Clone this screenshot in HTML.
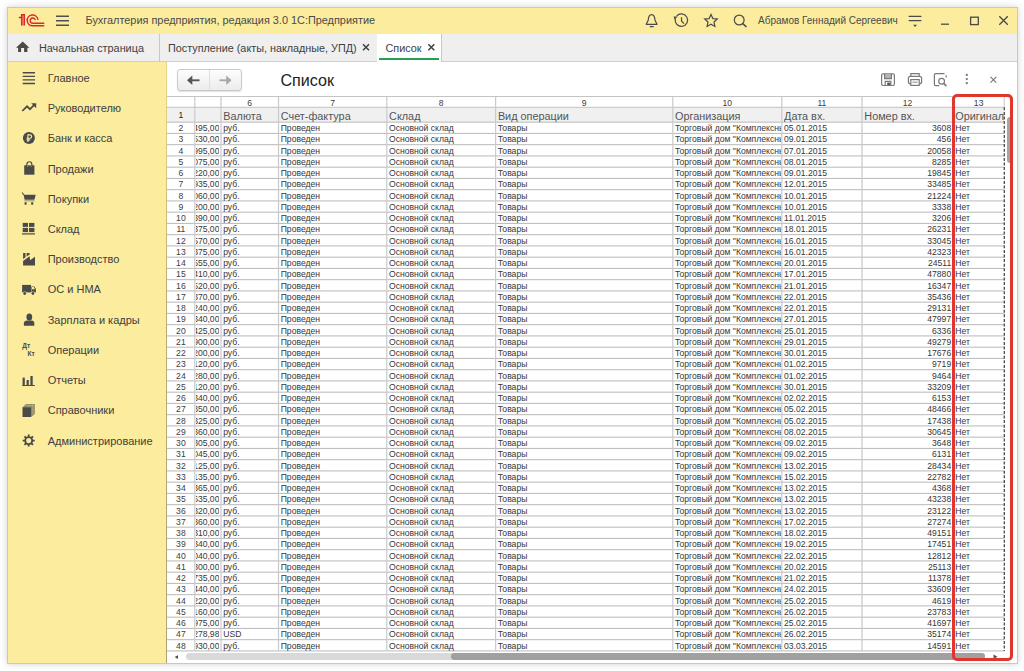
<!DOCTYPE html><html><head><meta charset="utf-8"><style>
*{margin:0;padding:0;box-sizing:border-box}
html,body{width:1024px;height:671px;overflow:hidden;background:#fff;font-family:"Liberation Sans",sans-serif}
.a{position:absolute}
.t{position:absolute;white-space:nowrap}
#win{position:absolute;left:7px;top:7px;width:1011px;height:657px;border:1px solid #dccb84;box-shadow:0 0 7px rgba(0,0,0,0.18);background:#fff;overflow:hidden}
</style></head><body>
<div id="win"></div>

<div class="a" style="left:8px;top:8px;width:1009px;height:26px;background:#fbec9e"></div>
<div class="a" style="left:8px;top:34px;width:1009px;height:28px;background:#efefef;border-bottom:1px solid #cfcfcf"></div>
<div class="a" style="left:8px;top:62px;width:158.5px;height:601px;background:#fbec9e"></div>
<div class="a" style="left:165.8px;top:62px;width:1.2px;height:601px;background:linear-gradient(#e6d98c,#b8ae76 40%,#aca472)"></div>
<svg class="a" style="left:0;top:0" width="60" height="34" viewBox="0 0 60 34">
<g fill="none" stroke="#da2a2c" stroke-width="1.5" stroke-linecap="round">
<path d="M21.7,25.6 V14.8 H24.3 V25.6" fill="#f0a58c" stroke-linecap="butt"/>
<path d="M19.3,17.5 H21.7"/>
<path d="M37.9,19.3 A5.4,5.4 0 1 0 32.6,25.8 H43.7"/>
<path d="M35.1,19.5 A2.6,2.6 0 1 0 32.6,23.25 H43.7"/>
</g></svg>
<svg class="a" style="left:0;top:0" width="80" height="34"><g stroke="#4f4f4f" stroke-width="1.4"><path d="M56,16.3H69M56,20.8H69M56,25.3H69"/></g></svg>
<div class="t" style="left:85.5px;top:13px;font-size:10.9px;line-height:14px;color:#4a4a4a">Бухгалтерия предприятия, редакция 3.0 1С:Предприятие</div>
<svg class="a" style="left:630px;top:8px" width="390" height="26" viewBox="630 8 390 26">
<g fill="none" stroke="#4a4a4a" stroke-width="1.2">
<path d="M651.6,14.6 C649.2,14.6 648.4,17.2 648.2,20.3 L646.2,24.3 H657 L655,20.3 C654.8,17.2 654,14.6 651.6,14.6 Z" stroke-linejoin="round"/>
<path d="M649.8,26.6 H653.6" stroke-width="1.3"/>
<path d="M676.6,16.2 A6.2,6.2 0 1 1 675.3,19"/>
<path d="M681.5,17.2 V21 L684,23.6"/>
<path d="M711,14.5 L712.9,18.6 L717.3,19 L714,22 L714.9,26.4 L711,24.2 L707.1,26.4 L708,22 L704.7,19 L709.1,18.6 Z"/>
<circle cx="739.2" cy="20" r="4.9"/>
<path d="M742.8,23.6 L746.5,27" stroke-width="1.6"/>
<path d="M909.2,16.4H920.9 M909.2,20.6H920.9" stroke-width="1.3" stroke-linecap="round"/>
<path d="M941,24.2H949" stroke-width="1.3"/>
<rect x="970.6" y="17.2" width="7.7" height="7.4" stroke-width="1.3"/>
<path d="M999.3,16.3 L1007.8,24.8 M1007.8,16.3 L999.3,24.8" stroke-width="1.3"/>
</g>
<path d="M673.6,16.6 L677.6,16.4 L674.6,19.8 Z" fill="#4a4a4a"/>
<path d="M913.1,24.8 H917 L915.05,27 Z" fill="#4a4a4a"/>
</svg>
<div class="t" style="left:758px;top:14px;font-size:10px;line-height:13px;color:#4a4a4a">Абрамов Геннадий Сергеевич</div>
<svg class="a" style="left:15px;top:40px" width="18" height="16" viewBox="15 40 18 16"><path d="M22.7,41.5 L16,47.8 H18.1 V52 H21.1 V48 H24.1 V52 H27.4 V47.8 H29.4 Z" fill="#4a4a4a"/></svg>
<div class="t" style="left:39px;top:41px;font-size:10.85px;line-height:14px;color:#404040">Начальная страница</div>
<div class="a" style="left:159px;top:34px;width:1px;height:28px;background:#c8c8c8"></div>
<div class="t" style="left:168px;top:41px;font-size:10.8px;line-height:14px;color:#404040">Поступление (акты, накладные, УПД)</div>
<svg class="a" style="left:360px;top:40px" width="16" height="16" viewBox="360 40 16 16"><path d="M363,44.3 L369,50.3 M369,44.3 L363,50.3" stroke="#404040" stroke-width="1.5"/></svg>
<div class="a" style="left:376.5px;top:34px;width:1px;height:28px;background:#c8c8c8"></div>
<div class="a" style="left:377.2px;top:34px;width:63.8px;height:27.8px;background:#fff"></div>
<div class="a" style="left:441px;top:34px;width:1px;height:28px;background:#c8c8c8"></div>
<div class="t" style="left:385.5px;top:41px;font-size:10.85px;line-height:14px;color:#404040">Список</div>
<svg class="a" style="left:425px;top:40px" width="16" height="16" viewBox="425 40 16 16"><path d="M428.3,44.3 L434.3,50.3 M434.3,44.3 L428.3,50.3" stroke="#404040" stroke-width="1.5"/></svg>
<div class="a" style="left:378.8px;top:58.4px;width:60.6px;height:2px;background:#23a050"></div>
<div class="t" style="left:47.7px;top:70.79px;font-size:11px;line-height:14px;color:#404040">Главное</div>
<div class="t" style="left:47.7px;top:101.03px;font-size:11px;line-height:14px;color:#404040">Руководителю</div>
<div class="t" style="left:47.7px;top:131.27px;font-size:11px;line-height:14px;color:#404040">Банк и касса</div>
<div class="t" style="left:47.7px;top:161.51px;font-size:11px;line-height:14px;color:#404040">Продажи</div>
<div class="t" style="left:47.7px;top:191.75px;font-size:11px;line-height:14px;color:#404040">Покупки</div>
<div class="t" style="left:47.7px;top:221.99px;font-size:11px;line-height:14px;color:#404040">Склад</div>
<div class="t" style="left:47.7px;top:252.23px;font-size:11px;line-height:14px;color:#404040">Производство</div>
<div class="t" style="left:47.7px;top:282.47px;font-size:11px;line-height:14px;color:#404040">ОС и НМА</div>
<div class="t" style="left:47.7px;top:312.71px;font-size:11px;line-height:14px;color:#404040">Зарплата и кадры</div>
<div class="t" style="left:47.7px;top:342.95px;font-size:11px;line-height:14px;color:#404040">Операции</div>
<div class="t" style="left:47.7px;top:373.19px;font-size:11px;line-height:14px;color:#404040">Отчеты</div>
<div class="t" style="left:47.7px;top:403.43px;font-size:11px;line-height:14px;color:#404040">Справочники</div>
<div class="t" style="left:47.7px;top:433.67px;font-size:11px;line-height:14px;color:#404040">Администрирование</div>
<svg class="a" style="left:0;top:60px" width="45" height="400" viewBox="0 60 45 400">
<g fill="#4a4a4a">
<path d="M22.7,72.7H35 M22.7,76.3H35 M22.7,79.9H35 M22.7,83.5H35" stroke="#4a4a4a" stroke-width="1.35"/>
<path d="M22.3,111 L27,106.3 L30,109.2 L34,105.2" fill="none" stroke="#4a4a4a" stroke-width="1.7"/>
<path d="M31.2,103.2 H36.2 V108.2 Z"/>
<circle cx="28.9" cy="138.1" r="6"/>
<path d="M27.9,142 V134.9 H30 A1.65,1.65 0 0 1 30,138.2 H26.6 M26.6,139.9 H30.2" fill="none" stroke="#fbec9e" stroke-width="1.15"/>
<path d="M24.2,165.3 H34.4 V174.7 H24.2 Z"/>
<path d="M26.9,167.2 V164.2 A2.45,2.45 0 0 1 31.8,164.2 V167.2" fill="none" stroke="#4a4a4a" stroke-width="1.2"/>
<path d="M27.6,165.4 V167 M31.1,165.4 V167" stroke="#9d9870" stroke-width="0.8"/>
<path d="M23.6,194.8 H35.7 L34.4,199.7 H24.6 Z"/>
<path d="M22.1,192.5 L23.9,195" fill="none" stroke="#4a4a4a" stroke-width="1.1"/>
<rect x="24.4" y="200.4" width="10" height="0.9" fill="#8f8a62"/>
<rect x="24.6" y="202.2" width="2" height="2.5"/>
<rect x="31.2" y="202.2" width="2" height="2.5"/>
<rect x="22.7" y="222.9" width="5.3" height="4"/>
<rect x="29" y="222.9" width="5.4" height="4"/>
<rect x="22.7" y="227.9" width="5.3" height="4.2"/>
<rect x="29" y="227.9" width="5.4" height="4.2"/>
<rect x="22" y="233.3" width="13" height="1.2"/>
<path d="M23.1,253.1 H25.5 V257.2 L23.1,259 Z"/>
<path d="M26.6,253.1 H29.6 V254.4 L26.6,256.6 Z"/>
<path d="M23.1,265.5 V261 L29.6,256.3 L30.1,260.3 L35,256.7 V265.5 Z"/>
<path d="M22.1,284.9 H31 V292.4 H22.1 Z"/>
<path d="M31.4,286.4 H34.2 L35.9,288.8 V292.4 H31.4 Z"/>
<path d="M31.9,287 H33.8 L35,289.3 H31.9 Z" fill="#fbec9e"/>
<circle cx="24.7" cy="293.5" r="2.1" fill="#fbec9e"/>
<circle cx="32.9" cy="293.5" r="2.1" fill="#fbec9e"/>
<circle cx="24.7" cy="293.5" r="1.4"/>
<circle cx="32.9" cy="293.5" r="1.4"/>
<ellipse cx="29.3" cy="316.9" rx="2.9" ry="3.5"/>
<path d="M23.9,325.8 V323.2 Q24.2,320.5 27,320.5 H31.6 Q34.3,320.5 34.3,323.2 V325.8 Z"/>
<rect x="22.6" y="377.6" width="2.2" height="7.5"/>
<rect x="26.6" y="380" width="2.2" height="5.1"/>
<rect x="30.4" y="376" width="2.3" height="9.1"/>
<rect x="22.2" y="385" width="12.6" height="1"/>
<path d="M22.6,407.2 L26,404 H34.8 V414 L31.1,417 V407.2 Z" fill="#8f8b66"/>
<path d="M25.5,405.6 H33.2 M29.2,405.6 V414 M32.9,404.5 V414.5" stroke="#c9c08a" stroke-width="0.6" fill="none"/>
<rect x="22.5" y="407.2" width="8.6" height="9.8"/>
</g>
<text x="22.2" y="348.2" font-family="Liberation Sans" font-weight="bold" font-size="6.6" fill="#4a4a4a">Дт</text>
<text x="27.6" y="355.8" font-family="Liberation Sans" font-weight="bold" font-size="6.6" fill="#4a4a4a">Кт</text>
<g transform="translate(28.7,440.6)">
<circle r="3.5" fill="none" stroke="#4a4a4a" stroke-width="1.9"/>
<g stroke="#4a4a4a" stroke-width="1.9">
<path d="M0,-6V-3.8 M0,6V3.8 M-6,0H-3.8 M6,0H3.8 M-4.25,-4.25L-2.7,-2.7 M4.25,4.25L2.7,2.7 M4.25,-4.25L2.7,-2.7 M-4.25,4.25L-2.7,2.7"/>
</g>
</g>
</svg>
<div class="a" style="left:177.2px;top:69.2px;width:64.4px;height:21.7px;border:1px solid #c9c9c9;border-radius:3px;background:linear-gradient(#fdfdfd,#ececec);box-shadow:0 1px 1px rgba(0,0,0,0.12)"></div>
<div class="a" style="left:209.3px;top:70px;width:1px;height:20px;background:#dedede"></div>
<svg class="a" style="left:180px;top:70px" width="60" height="20" viewBox="180 70 60 20">
<path d="M188,80.3 H199.5" stroke="#555" stroke-width="1.9"/><path d="M187,80.3 L192.3,75.5 V85.1 Z" fill="#555"/>
<path d="M219.5,80.3 H230.5" stroke="#a8a8a8" stroke-width="1.9"/><path d="M231.5,80.3 L226.2,75.5 V85.1 Z" fill="#a8a8a8"/>
</svg>
<div class="t" style="left:280.5px;top:70px;font-size:16.1px;line-height:20px;color:#222">Список</div>
<svg class="a" style="left:870px;top:65px" width="140" height="30" viewBox="870 65 140 30">
<g fill="none" stroke="#7a7a7a" stroke-width="1.2">
<rect x="881.6" y="73.9" width="12.8" height="11.6" rx="1.6"/>
<path d="M884.6,74 V78.6 H891.4 V74" fill="#b4b4b4"/>
<path d="M885.2,85.4 V81.4 H890.8 V85.4"/>
<path d="M910.8,76.2 V73.6 H919.2 V76.2"/>
<rect x="908.4" y="76.4" width="13.2" height="7.4" rx="2"/>
<rect x="910.8" y="79.6" width="8.4" height="5.8" fill="#fff"/>
<path d="M912.4,82.2 H917.6" stroke-width="0.9"/>
<path d="M939.2,85.7 H935.6 Q934.4,85.7 934.4,84.5 V74.8 Q934.4,73.6 935.6,73.6 H944.6"/>
<path d="M946.2,75.2 V77.6"/>
<circle cx="941.6" cy="81.3" r="2.9"/>
<path d="M943.7,83.4 L946.4,86.1" stroke-width="1.6"/>
<path d="M990.5,76.8 L996.3,82.6 M996.3,76.8 L990.5,82.6"/>
</g>
<g fill="#7a7a7a"><circle cx="966.8" cy="74.9" r="1.15"/><circle cx="966.8" cy="79.1" r="1.15"/><circle cx="966.8" cy="83.2" r="1.15"/><rect x="887.2" y="82.6" width="3" height="2.4" fill="#555"/></g>
</svg>
<div class="a" style="left:167.0px;top:107.3px;width:837.3px;height:14.900000000000006px;background:#f0f0f0"></div>
<svg class="a" style="left:0;top:0" width="1024" height="671" viewBox="0 0 1024 671"><rect x="167.0" y="96.0" width="837.3" height="1" fill="#c4c4c4"/><rect x="167.0" y="106.8" width="837.3" height="1" fill="#c4c4c4"/><rect x="167.0" y="121.65" width="837.3" height="1.05" fill="#bcbcbc"/><rect x="167.0" y="132.90" width="837.3" height="1.05" fill="#bcbcbc"/><rect x="167.0" y="144.15" width="837.3" height="1.05" fill="#bcbcbc"/><rect x="167.0" y="155.40" width="837.3" height="1.05" fill="#bcbcbc"/><rect x="167.0" y="166.65" width="837.3" height="1.05" fill="#bcbcbc"/><rect x="167.0" y="177.90" width="837.3" height="1.05" fill="#bcbcbc"/><rect x="167.0" y="189.15" width="837.3" height="1.05" fill="#bcbcbc"/><rect x="167.0" y="200.40" width="837.3" height="1.05" fill="#bcbcbc"/><rect x="167.0" y="211.65" width="837.3" height="1.05" fill="#bcbcbc"/><rect x="167.0" y="222.90" width="837.3" height="1.05" fill="#bcbcbc"/><rect x="167.0" y="234.15" width="837.3" height="1.05" fill="#bcbcbc"/><rect x="167.0" y="245.40" width="837.3" height="1.05" fill="#bcbcbc"/><rect x="167.0" y="256.65" width="837.3" height="1.05" fill="#bcbcbc"/><rect x="167.0" y="267.90" width="837.3" height="1.05" fill="#bcbcbc"/><rect x="167.0" y="279.15" width="837.3" height="1.05" fill="#bcbcbc"/><rect x="167.0" y="290.40" width="837.3" height="1.05" fill="#bcbcbc"/><rect x="167.0" y="301.65" width="837.3" height="1.05" fill="#bcbcbc"/><rect x="167.0" y="312.90" width="837.3" height="1.05" fill="#bcbcbc"/><rect x="167.0" y="324.15" width="837.3" height="1.05" fill="#bcbcbc"/><rect x="167.0" y="335.40" width="837.3" height="1.05" fill="#bcbcbc"/><rect x="167.0" y="346.65" width="837.3" height="1.05" fill="#bcbcbc"/><rect x="167.0" y="357.90" width="837.3" height="1.05" fill="#bcbcbc"/><rect x="167.0" y="369.15" width="837.3" height="1.05" fill="#bcbcbc"/><rect x="167.0" y="380.40" width="837.3" height="1.05" fill="#bcbcbc"/><rect x="167.0" y="391.65" width="837.3" height="1.05" fill="#bcbcbc"/><rect x="167.0" y="402.90" width="837.3" height="1.05" fill="#bcbcbc"/><rect x="167.0" y="414.15" width="837.3" height="1.05" fill="#bcbcbc"/><rect x="167.0" y="425.40" width="837.3" height="1.05" fill="#bcbcbc"/><rect x="167.0" y="436.65" width="837.3" height="1.05" fill="#bcbcbc"/><rect x="167.0" y="447.90" width="837.3" height="1.05" fill="#bcbcbc"/><rect x="167.0" y="459.15" width="837.3" height="1.05" fill="#bcbcbc"/><rect x="167.0" y="470.40" width="837.3" height="1.05" fill="#bcbcbc"/><rect x="167.0" y="481.65" width="837.3" height="1.05" fill="#bcbcbc"/><rect x="167.0" y="492.90" width="837.3" height="1.05" fill="#bcbcbc"/><rect x="167.0" y="504.15" width="837.3" height="1.05" fill="#bcbcbc"/><rect x="167.0" y="515.40" width="837.3" height="1.05" fill="#bcbcbc"/><rect x="167.0" y="526.65" width="837.3" height="1.05" fill="#bcbcbc"/><rect x="167.0" y="537.90" width="837.3" height="1.05" fill="#bcbcbc"/><rect x="167.0" y="549.15" width="837.3" height="1.05" fill="#bcbcbc"/><rect x="167.0" y="560.40" width="837.3" height="1.05" fill="#bcbcbc"/><rect x="167.0" y="571.65" width="837.3" height="1.05" fill="#bcbcbc"/><rect x="167.0" y="582.90" width="837.3" height="1.05" fill="#bcbcbc"/><rect x="167.0" y="594.15" width="837.3" height="1.05" fill="#bcbcbc"/><rect x="167.0" y="605.40" width="837.3" height="1.05" fill="#bcbcbc"/><rect x="167.0" y="616.65" width="837.3" height="1.05" fill="#bcbcbc"/><rect x="167.0" y="627.90" width="837.3" height="1.05" fill="#bcbcbc"/><rect x="167.0" y="639.15" width="837.3" height="1.05" fill="#bcbcbc"/><rect x="167.0" y="650.40" width="837.3" height="1.05" fill="#bcbcbc"/><rect x="194.18" y="96.5" width="1.25" height="554.45" fill="#cbcbcb"/><rect x="220.38" y="96.5" width="1.25" height="554.45" fill="#cbcbcb"/><rect x="277.88" y="96.5" width="1.25" height="554.45" fill="#cbcbcb"/><rect x="386.18" y="96.5" width="1.25" height="554.45" fill="#cbcbcb"/><rect x="494.98" y="96.5" width="1.25" height="554.45" fill="#cbcbcb"/><rect x="672.18" y="96.5" width="1.25" height="554.45" fill="#cbcbcb"/><rect x="781.18" y="96.5" width="1.25" height="554.45" fill="#cbcbcb"/><rect x="861.38" y="96.5" width="1.25" height="554.45" fill="#cbcbcb"/><rect x="952.38" y="96.5" width="1.25" height="554.45" fill="#cbcbcb"/><rect x="1003.70" y="96.5" width="1.2" height="10.80" fill="#d0d0d0"/><path d="M1004.3,107.3 V650.95" stroke="#4a4a4a" stroke-width="1.3" stroke-dasharray="3 1.6"/></svg>
<div class="t" style="left:221.00px;top:97.82px;width:57.50px;text-align:center;font-size:8.6px;line-height:11px;color:#404040">6</div>
<div class="t" style="left:278.50px;top:97.82px;width:108.30px;text-align:center;font-size:8.6px;line-height:11px;color:#404040">7</div>
<div class="t" style="left:386.80px;top:97.82px;width:108.80px;text-align:center;font-size:8.6px;line-height:11px;color:#404040">8</div>
<div class="t" style="left:495.60px;top:97.82px;width:177.20px;text-align:center;font-size:8.6px;line-height:11px;color:#404040">9</div>
<div class="t" style="left:672.80px;top:97.82px;width:109.00px;text-align:center;font-size:8.6px;line-height:11px;color:#404040">10</div>
<div class="t" style="left:781.80px;top:97.82px;width:80.20px;text-align:center;font-size:8.6px;line-height:11px;color:#404040">11</div>
<div class="t" style="left:862.00px;top:97.82px;width:91.00px;text-align:center;font-size:8.6px;line-height:11px;color:#404040">12</div>
<div class="t" style="left:953.00px;top:97.82px;width:51.30px;text-align:center;font-size:8.6px;line-height:11px;color:#404040">13</div>
<div class="t" style="left:223.30px;top:108.84px;width:54.60px;overflow:hidden;font-size:10.85px;line-height:14px;color:#555">Валюта</div>
<div class="t" style="left:280.80px;top:108.84px;width:105.40px;overflow:hidden;font-size:10.85px;line-height:14px;color:#555">Счет-фактура</div>
<div class="t" style="left:389.10px;top:108.84px;width:105.90px;overflow:hidden;font-size:10.85px;line-height:14px;color:#555">Склад</div>
<div class="t" style="left:497.90px;top:108.84px;width:174.30px;overflow:hidden;font-size:10.85px;line-height:14px;color:#555">Вид операции</div>
<div class="t" style="left:675.10px;top:108.84px;width:106.10px;overflow:hidden;font-size:10.85px;line-height:14px;color:#555">Организация</div>
<div class="t" style="left:784.10px;top:108.84px;width:77.30px;overflow:hidden;font-size:10.85px;line-height:14px;color:#555">Дата вх.</div>
<div class="t" style="left:864.30px;top:108.84px;width:88.10px;overflow:hidden;font-size:10.85px;line-height:14px;color:#555">Номер вх.</div>
<div class="t" style="left:955.30px;top:108.84px;width:48.40px;overflow:hidden;font-size:10.85px;line-height:14px;color:#555">Оригинал</div>
<div class="t" style="left:167.0px;top:110.12px;width:27.80px;text-align:center;font-size:8.6px;line-height:11px;color:#1e1e1e">1</div>
<div class="t" style="left:167.00px;top:123.17px;width:27.80px;text-align:center;font-size:8.6px;line-height:11px;color:#404040">2</div>
<div class="a" style="left:195.55px;top:123.17px;width:23.90px;height:11px;overflow:hidden"><div class="t" style="right:0;top:0;font-size:8.6px;line-height:11px;color:#363636">1495,00</div></div>
<div class="t" style="left:223.20px;top:123.17px;font-size:8.6px;line-height:11px;color:#363636">руб.</div>
<div class="t" style="left:280.70px;top:123.17px;font-size:8.6px;line-height:11px;color:#363636">Проведен</div>
<div class="t" style="left:389.00px;top:123.17px;font-size:8.6px;line-height:11px;color:#363636">Основной склад</div>
<div class="t" style="left:497.80px;top:123.17px;font-size:8.6px;line-height:11px;color:#363636">Товары</div>
<div class="a" style="left:674.30px;top:123.17px;width:106.80px;height:11px;overflow:hidden"><div class="t" style="left:0.7px;top:0;font-size:8.6px;line-height:11px;color:#363636">Торговый дом "Комплексный"</div></div>
<div class="t" style="left:784.00px;top:123.17px;font-size:8.6px;line-height:11px;color:#363636">05.01.2015</div>
<div class="t" style="left:862.00px;top:123.17px;width:89.20px;text-align:right;font-size:8.6px;line-height:11px;color:#363636">3608</div>
<div class="t" style="left:955.20px;top:123.17px;font-size:8.6px;line-height:11px;color:#363636">Нет</div>
<div class="t" style="left:167.00px;top:134.42px;width:27.80px;text-align:center;font-size:8.6px;line-height:11px;color:#404040">3</div>
<div class="a" style="left:195.55px;top:134.42px;width:23.90px;height:11px;overflow:hidden"><div class="t" style="right:0;top:0;font-size:8.6px;line-height:11px;color:#363636">1530,00</div></div>
<div class="t" style="left:223.20px;top:134.42px;font-size:8.6px;line-height:11px;color:#363636">руб.</div>
<div class="t" style="left:280.70px;top:134.42px;font-size:8.6px;line-height:11px;color:#363636">Проведен</div>
<div class="t" style="left:389.00px;top:134.42px;font-size:8.6px;line-height:11px;color:#363636">Основной склад</div>
<div class="t" style="left:497.80px;top:134.42px;font-size:8.6px;line-height:11px;color:#363636">Товары</div>
<div class="a" style="left:674.30px;top:134.42px;width:106.80px;height:11px;overflow:hidden"><div class="t" style="left:0.7px;top:0;font-size:8.6px;line-height:11px;color:#363636">Торговый дом "Комплексный"</div></div>
<div class="t" style="left:784.00px;top:134.42px;font-size:8.6px;line-height:11px;color:#363636">09.01.2015</div>
<div class="t" style="left:862.00px;top:134.42px;width:89.20px;text-align:right;font-size:8.6px;line-height:11px;color:#363636">456</div>
<div class="t" style="left:955.20px;top:134.42px;font-size:8.6px;line-height:11px;color:#363636">Нет</div>
<div class="t" style="left:167.00px;top:145.67px;width:27.80px;text-align:center;font-size:8.6px;line-height:11px;color:#404040">4</div>
<div class="a" style="left:195.55px;top:145.67px;width:23.90px;height:11px;overflow:hidden"><div class="t" style="right:0;top:0;font-size:8.6px;line-height:11px;color:#363636">1995,00</div></div>
<div class="t" style="left:223.20px;top:145.67px;font-size:8.6px;line-height:11px;color:#363636">руб.</div>
<div class="t" style="left:280.70px;top:145.67px;font-size:8.6px;line-height:11px;color:#363636">Проведен</div>
<div class="t" style="left:389.00px;top:145.67px;font-size:8.6px;line-height:11px;color:#363636">Основной склад</div>
<div class="t" style="left:497.80px;top:145.67px;font-size:8.6px;line-height:11px;color:#363636">Товары</div>
<div class="a" style="left:674.30px;top:145.67px;width:106.80px;height:11px;overflow:hidden"><div class="t" style="left:0.7px;top:0;font-size:8.6px;line-height:11px;color:#363636">Торговый дом "Комплексный"</div></div>
<div class="t" style="left:784.00px;top:145.67px;font-size:8.6px;line-height:11px;color:#363636">07.01.2015</div>
<div class="t" style="left:862.00px;top:145.67px;width:89.20px;text-align:right;font-size:8.6px;line-height:11px;color:#363636">20058</div>
<div class="t" style="left:955.20px;top:145.67px;font-size:8.6px;line-height:11px;color:#363636">Нет</div>
<div class="t" style="left:167.00px;top:156.92px;width:27.80px;text-align:center;font-size:8.6px;line-height:11px;color:#404040">5</div>
<div class="a" style="left:195.55px;top:156.92px;width:23.90px;height:11px;overflow:hidden"><div class="t" style="right:0;top:0;font-size:8.6px;line-height:11px;color:#363636">1075,00</div></div>
<div class="t" style="left:223.20px;top:156.92px;font-size:8.6px;line-height:11px;color:#363636">руб.</div>
<div class="t" style="left:280.70px;top:156.92px;font-size:8.6px;line-height:11px;color:#363636">Проведен</div>
<div class="t" style="left:389.00px;top:156.92px;font-size:8.6px;line-height:11px;color:#363636">Основной склад</div>
<div class="t" style="left:497.80px;top:156.92px;font-size:8.6px;line-height:11px;color:#363636">Товары</div>
<div class="a" style="left:674.30px;top:156.92px;width:106.80px;height:11px;overflow:hidden"><div class="t" style="left:0.7px;top:0;font-size:8.6px;line-height:11px;color:#363636">Торговый дом "Комплексный"</div></div>
<div class="t" style="left:784.00px;top:156.92px;font-size:8.6px;line-height:11px;color:#363636">08.01.2015</div>
<div class="t" style="left:862.00px;top:156.92px;width:89.20px;text-align:right;font-size:8.6px;line-height:11px;color:#363636">8285</div>
<div class="t" style="left:955.20px;top:156.92px;font-size:8.6px;line-height:11px;color:#363636">Нет</div>
<div class="t" style="left:167.00px;top:168.17px;width:27.80px;text-align:center;font-size:8.6px;line-height:11px;color:#404040">6</div>
<div class="a" style="left:195.55px;top:168.17px;width:23.90px;height:11px;overflow:hidden"><div class="t" style="right:0;top:0;font-size:8.6px;line-height:11px;color:#363636">1220,00</div></div>
<div class="t" style="left:223.20px;top:168.17px;font-size:8.6px;line-height:11px;color:#363636">руб.</div>
<div class="t" style="left:280.70px;top:168.17px;font-size:8.6px;line-height:11px;color:#363636">Проведен</div>
<div class="t" style="left:389.00px;top:168.17px;font-size:8.6px;line-height:11px;color:#363636">Основной склад</div>
<div class="t" style="left:497.80px;top:168.17px;font-size:8.6px;line-height:11px;color:#363636">Товары</div>
<div class="a" style="left:674.30px;top:168.17px;width:106.80px;height:11px;overflow:hidden"><div class="t" style="left:0.7px;top:0;font-size:8.6px;line-height:11px;color:#363636">Торговый дом "Комплексный"</div></div>
<div class="t" style="left:784.00px;top:168.17px;font-size:8.6px;line-height:11px;color:#363636">09.01.2015</div>
<div class="t" style="left:862.00px;top:168.17px;width:89.20px;text-align:right;font-size:8.6px;line-height:11px;color:#363636">19845</div>
<div class="t" style="left:955.20px;top:168.17px;font-size:8.6px;line-height:11px;color:#363636">Нет</div>
<div class="t" style="left:167.00px;top:179.42px;width:27.80px;text-align:center;font-size:8.6px;line-height:11px;color:#404040">7</div>
<div class="a" style="left:195.55px;top:179.42px;width:23.90px;height:11px;overflow:hidden"><div class="t" style="right:0;top:0;font-size:8.6px;line-height:11px;color:#363636">1935,00</div></div>
<div class="t" style="left:223.20px;top:179.42px;font-size:8.6px;line-height:11px;color:#363636">руб.</div>
<div class="t" style="left:280.70px;top:179.42px;font-size:8.6px;line-height:11px;color:#363636">Проведен</div>
<div class="t" style="left:389.00px;top:179.42px;font-size:8.6px;line-height:11px;color:#363636">Основной склад</div>
<div class="t" style="left:497.80px;top:179.42px;font-size:8.6px;line-height:11px;color:#363636">Товары</div>
<div class="a" style="left:674.30px;top:179.42px;width:106.80px;height:11px;overflow:hidden"><div class="t" style="left:0.7px;top:0;font-size:8.6px;line-height:11px;color:#363636">Торговый дом "Комплексный"</div></div>
<div class="t" style="left:784.00px;top:179.42px;font-size:8.6px;line-height:11px;color:#363636">12.01.2015</div>
<div class="t" style="left:862.00px;top:179.42px;width:89.20px;text-align:right;font-size:8.6px;line-height:11px;color:#363636">33485</div>
<div class="t" style="left:955.20px;top:179.42px;font-size:8.6px;line-height:11px;color:#363636">Нет</div>
<div class="t" style="left:167.00px;top:190.67px;width:27.80px;text-align:center;font-size:8.6px;line-height:11px;color:#404040">8</div>
<div class="a" style="left:195.55px;top:190.67px;width:23.90px;height:11px;overflow:hidden"><div class="t" style="right:0;top:0;font-size:8.6px;line-height:11px;color:#363636">1060,00</div></div>
<div class="t" style="left:223.20px;top:190.67px;font-size:8.6px;line-height:11px;color:#363636">руб.</div>
<div class="t" style="left:280.70px;top:190.67px;font-size:8.6px;line-height:11px;color:#363636">Проведен</div>
<div class="t" style="left:389.00px;top:190.67px;font-size:8.6px;line-height:11px;color:#363636">Основной склад</div>
<div class="t" style="left:497.80px;top:190.67px;font-size:8.6px;line-height:11px;color:#363636">Товары</div>
<div class="a" style="left:674.30px;top:190.67px;width:106.80px;height:11px;overflow:hidden"><div class="t" style="left:0.7px;top:0;font-size:8.6px;line-height:11px;color:#363636">Торговый дом "Комплексный"</div></div>
<div class="t" style="left:784.00px;top:190.67px;font-size:8.6px;line-height:11px;color:#363636">10.01.2015</div>
<div class="t" style="left:862.00px;top:190.67px;width:89.20px;text-align:right;font-size:8.6px;line-height:11px;color:#363636">21224</div>
<div class="t" style="left:955.20px;top:190.67px;font-size:8.6px;line-height:11px;color:#363636">Нет</div>
<div class="t" style="left:167.00px;top:201.92px;width:27.80px;text-align:center;font-size:8.6px;line-height:11px;color:#404040">9</div>
<div class="a" style="left:195.55px;top:201.92px;width:23.90px;height:11px;overflow:hidden"><div class="t" style="right:0;top:0;font-size:8.6px;line-height:11px;color:#363636">1200,00</div></div>
<div class="t" style="left:223.20px;top:201.92px;font-size:8.6px;line-height:11px;color:#363636">руб.</div>
<div class="t" style="left:280.70px;top:201.92px;font-size:8.6px;line-height:11px;color:#363636">Проведен</div>
<div class="t" style="left:389.00px;top:201.92px;font-size:8.6px;line-height:11px;color:#363636">Основной склад</div>
<div class="t" style="left:497.80px;top:201.92px;font-size:8.6px;line-height:11px;color:#363636">Товары</div>
<div class="a" style="left:674.30px;top:201.92px;width:106.80px;height:11px;overflow:hidden"><div class="t" style="left:0.7px;top:0;font-size:8.6px;line-height:11px;color:#363636">Торговый дом "Комплексный"</div></div>
<div class="t" style="left:784.00px;top:201.92px;font-size:8.6px;line-height:11px;color:#363636">10.01.2015</div>
<div class="t" style="left:862.00px;top:201.92px;width:89.20px;text-align:right;font-size:8.6px;line-height:11px;color:#363636">3338</div>
<div class="t" style="left:955.20px;top:201.92px;font-size:8.6px;line-height:11px;color:#363636">Нет</div>
<div class="t" style="left:167.00px;top:213.17px;width:27.80px;text-align:center;font-size:8.6px;line-height:11px;color:#404040">10</div>
<div class="a" style="left:195.55px;top:213.17px;width:23.90px;height:11px;overflow:hidden"><div class="t" style="right:0;top:0;font-size:8.6px;line-height:11px;color:#363636">1390,00</div></div>
<div class="t" style="left:223.20px;top:213.17px;font-size:8.6px;line-height:11px;color:#363636">руб.</div>
<div class="t" style="left:280.70px;top:213.17px;font-size:8.6px;line-height:11px;color:#363636">Проведен</div>
<div class="t" style="left:389.00px;top:213.17px;font-size:8.6px;line-height:11px;color:#363636">Основной склад</div>
<div class="t" style="left:497.80px;top:213.17px;font-size:8.6px;line-height:11px;color:#363636">Товары</div>
<div class="a" style="left:674.30px;top:213.17px;width:106.80px;height:11px;overflow:hidden"><div class="t" style="left:0.7px;top:0;font-size:8.6px;line-height:11px;color:#363636">Торговый дом "Комплексный"</div></div>
<div class="t" style="left:784.00px;top:213.17px;font-size:8.6px;line-height:11px;color:#363636">11.01.2015</div>
<div class="t" style="left:862.00px;top:213.17px;width:89.20px;text-align:right;font-size:8.6px;line-height:11px;color:#363636">3206</div>
<div class="t" style="left:955.20px;top:213.17px;font-size:8.6px;line-height:11px;color:#363636">Нет</div>
<div class="t" style="left:167.00px;top:224.42px;width:27.80px;text-align:center;font-size:8.6px;line-height:11px;color:#404040">11</div>
<div class="a" style="left:195.55px;top:224.42px;width:23.90px;height:11px;overflow:hidden"><div class="t" style="right:0;top:0;font-size:8.6px;line-height:11px;color:#363636">1375,00</div></div>
<div class="t" style="left:223.20px;top:224.42px;font-size:8.6px;line-height:11px;color:#363636">руб.</div>
<div class="t" style="left:280.70px;top:224.42px;font-size:8.6px;line-height:11px;color:#363636">Проведен</div>
<div class="t" style="left:389.00px;top:224.42px;font-size:8.6px;line-height:11px;color:#363636">Основной склад</div>
<div class="t" style="left:497.80px;top:224.42px;font-size:8.6px;line-height:11px;color:#363636">Товары</div>
<div class="a" style="left:674.30px;top:224.42px;width:106.80px;height:11px;overflow:hidden"><div class="t" style="left:0.7px;top:0;font-size:8.6px;line-height:11px;color:#363636">Торговый дом "Комплексный"</div></div>
<div class="t" style="left:784.00px;top:224.42px;font-size:8.6px;line-height:11px;color:#363636">18.01.2015</div>
<div class="t" style="left:862.00px;top:224.42px;width:89.20px;text-align:right;font-size:8.6px;line-height:11px;color:#363636">26231</div>
<div class="t" style="left:955.20px;top:224.42px;font-size:8.6px;line-height:11px;color:#363636">Нет</div>
<div class="t" style="left:167.00px;top:235.67px;width:27.80px;text-align:center;font-size:8.6px;line-height:11px;color:#404040">12</div>
<div class="a" style="left:195.55px;top:235.67px;width:23.90px;height:11px;overflow:hidden"><div class="t" style="right:0;top:0;font-size:8.6px;line-height:11px;color:#363636">1570,00</div></div>
<div class="t" style="left:223.20px;top:235.67px;font-size:8.6px;line-height:11px;color:#363636">руб.</div>
<div class="t" style="left:280.70px;top:235.67px;font-size:8.6px;line-height:11px;color:#363636">Проведен</div>
<div class="t" style="left:389.00px;top:235.67px;font-size:8.6px;line-height:11px;color:#363636">Основной склад</div>
<div class="t" style="left:497.80px;top:235.67px;font-size:8.6px;line-height:11px;color:#363636">Товары</div>
<div class="a" style="left:674.30px;top:235.67px;width:106.80px;height:11px;overflow:hidden"><div class="t" style="left:0.7px;top:0;font-size:8.6px;line-height:11px;color:#363636">Торговый дом "Комплексный"</div></div>
<div class="t" style="left:784.00px;top:235.67px;font-size:8.6px;line-height:11px;color:#363636">16.01.2015</div>
<div class="t" style="left:862.00px;top:235.67px;width:89.20px;text-align:right;font-size:8.6px;line-height:11px;color:#363636">33045</div>
<div class="t" style="left:955.20px;top:235.67px;font-size:8.6px;line-height:11px;color:#363636">Нет</div>
<div class="t" style="left:167.00px;top:246.92px;width:27.80px;text-align:center;font-size:8.6px;line-height:11px;color:#404040">13</div>
<div class="a" style="left:195.55px;top:246.92px;width:23.90px;height:11px;overflow:hidden"><div class="t" style="right:0;top:0;font-size:8.6px;line-height:11px;color:#363636">1375,00</div></div>
<div class="t" style="left:223.20px;top:246.92px;font-size:8.6px;line-height:11px;color:#363636">руб.</div>
<div class="t" style="left:280.70px;top:246.92px;font-size:8.6px;line-height:11px;color:#363636">Проведен</div>
<div class="t" style="left:389.00px;top:246.92px;font-size:8.6px;line-height:11px;color:#363636">Основной склад</div>
<div class="t" style="left:497.80px;top:246.92px;font-size:8.6px;line-height:11px;color:#363636">Товары</div>
<div class="a" style="left:674.30px;top:246.92px;width:106.80px;height:11px;overflow:hidden"><div class="t" style="left:0.7px;top:0;font-size:8.6px;line-height:11px;color:#363636">Торговый дом "Комплексный"</div></div>
<div class="t" style="left:784.00px;top:246.92px;font-size:8.6px;line-height:11px;color:#363636">16.01.2015</div>
<div class="t" style="left:862.00px;top:246.92px;width:89.20px;text-align:right;font-size:8.6px;line-height:11px;color:#363636">42323</div>
<div class="t" style="left:955.20px;top:246.92px;font-size:8.6px;line-height:11px;color:#363636">Нет</div>
<div class="t" style="left:167.00px;top:258.17px;width:27.80px;text-align:center;font-size:8.6px;line-height:11px;color:#404040">14</div>
<div class="a" style="left:195.55px;top:258.17px;width:23.90px;height:11px;overflow:hidden"><div class="t" style="right:0;top:0;font-size:8.6px;line-height:11px;color:#363636">1555,00</div></div>
<div class="t" style="left:223.20px;top:258.17px;font-size:8.6px;line-height:11px;color:#363636">руб.</div>
<div class="t" style="left:280.70px;top:258.17px;font-size:8.6px;line-height:11px;color:#363636">Проведен</div>
<div class="t" style="left:389.00px;top:258.17px;font-size:8.6px;line-height:11px;color:#363636">Основной склад</div>
<div class="t" style="left:497.80px;top:258.17px;font-size:8.6px;line-height:11px;color:#363636">Товары</div>
<div class="a" style="left:674.30px;top:258.17px;width:106.80px;height:11px;overflow:hidden"><div class="t" style="left:0.7px;top:0;font-size:8.6px;line-height:11px;color:#363636">Торговый дом "Комплексный"</div></div>
<div class="t" style="left:784.00px;top:258.17px;font-size:8.6px;line-height:11px;color:#363636">20.01.2015</div>
<div class="t" style="left:862.00px;top:258.17px;width:89.20px;text-align:right;font-size:8.6px;line-height:11px;color:#363636">24511</div>
<div class="t" style="left:955.20px;top:258.17px;font-size:8.6px;line-height:11px;color:#363636">Нет</div>
<div class="t" style="left:167.00px;top:269.42px;width:27.80px;text-align:center;font-size:8.6px;line-height:11px;color:#404040">15</div>
<div class="a" style="left:195.55px;top:269.42px;width:23.90px;height:11px;overflow:hidden"><div class="t" style="right:0;top:0;font-size:8.6px;line-height:11px;color:#363636">1410,00</div></div>
<div class="t" style="left:223.20px;top:269.42px;font-size:8.6px;line-height:11px;color:#363636">руб.</div>
<div class="t" style="left:280.70px;top:269.42px;font-size:8.6px;line-height:11px;color:#363636">Проведен</div>
<div class="t" style="left:389.00px;top:269.42px;font-size:8.6px;line-height:11px;color:#363636">Основной склад</div>
<div class="t" style="left:497.80px;top:269.42px;font-size:8.6px;line-height:11px;color:#363636">Товары</div>
<div class="a" style="left:674.30px;top:269.42px;width:106.80px;height:11px;overflow:hidden"><div class="t" style="left:0.7px;top:0;font-size:8.6px;line-height:11px;color:#363636">Торговый дом "Комплексный"</div></div>
<div class="t" style="left:784.00px;top:269.42px;font-size:8.6px;line-height:11px;color:#363636">17.01.2015</div>
<div class="t" style="left:862.00px;top:269.42px;width:89.20px;text-align:right;font-size:8.6px;line-height:11px;color:#363636">47880</div>
<div class="t" style="left:955.20px;top:269.42px;font-size:8.6px;line-height:11px;color:#363636">Нет</div>
<div class="t" style="left:167.00px;top:280.67px;width:27.80px;text-align:center;font-size:8.6px;line-height:11px;color:#404040">16</div>
<div class="a" style="left:195.55px;top:280.67px;width:23.90px;height:11px;overflow:hidden"><div class="t" style="right:0;top:0;font-size:8.6px;line-height:11px;color:#363636">1520,00</div></div>
<div class="t" style="left:223.20px;top:280.67px;font-size:8.6px;line-height:11px;color:#363636">руб.</div>
<div class="t" style="left:280.70px;top:280.67px;font-size:8.6px;line-height:11px;color:#363636">Проведен</div>
<div class="t" style="left:389.00px;top:280.67px;font-size:8.6px;line-height:11px;color:#363636">Основной склад</div>
<div class="t" style="left:497.80px;top:280.67px;font-size:8.6px;line-height:11px;color:#363636">Товары</div>
<div class="a" style="left:674.30px;top:280.67px;width:106.80px;height:11px;overflow:hidden"><div class="t" style="left:0.7px;top:0;font-size:8.6px;line-height:11px;color:#363636">Торговый дом "Комплексный"</div></div>
<div class="t" style="left:784.00px;top:280.67px;font-size:8.6px;line-height:11px;color:#363636">21.01.2015</div>
<div class="t" style="left:862.00px;top:280.67px;width:89.20px;text-align:right;font-size:8.6px;line-height:11px;color:#363636">16347</div>
<div class="t" style="left:955.20px;top:280.67px;font-size:8.6px;line-height:11px;color:#363636">Нет</div>
<div class="t" style="left:167.00px;top:291.92px;width:27.80px;text-align:center;font-size:8.6px;line-height:11px;color:#404040">17</div>
<div class="a" style="left:195.55px;top:291.92px;width:23.90px;height:11px;overflow:hidden"><div class="t" style="right:0;top:0;font-size:8.6px;line-height:11px;color:#363636">1370,00</div></div>
<div class="t" style="left:223.20px;top:291.92px;font-size:8.6px;line-height:11px;color:#363636">руб.</div>
<div class="t" style="left:280.70px;top:291.92px;font-size:8.6px;line-height:11px;color:#363636">Проведен</div>
<div class="t" style="left:389.00px;top:291.92px;font-size:8.6px;line-height:11px;color:#363636">Основной склад</div>
<div class="t" style="left:497.80px;top:291.92px;font-size:8.6px;line-height:11px;color:#363636">Товары</div>
<div class="a" style="left:674.30px;top:291.92px;width:106.80px;height:11px;overflow:hidden"><div class="t" style="left:0.7px;top:0;font-size:8.6px;line-height:11px;color:#363636">Торговый дом "Комплексный"</div></div>
<div class="t" style="left:784.00px;top:291.92px;font-size:8.6px;line-height:11px;color:#363636">22.01.2015</div>
<div class="t" style="left:862.00px;top:291.92px;width:89.20px;text-align:right;font-size:8.6px;line-height:11px;color:#363636">35436</div>
<div class="t" style="left:955.20px;top:291.92px;font-size:8.6px;line-height:11px;color:#363636">Нет</div>
<div class="t" style="left:167.00px;top:303.17px;width:27.80px;text-align:center;font-size:8.6px;line-height:11px;color:#404040">18</div>
<div class="a" style="left:195.55px;top:303.17px;width:23.90px;height:11px;overflow:hidden"><div class="t" style="right:0;top:0;font-size:8.6px;line-height:11px;color:#363636">1240,00</div></div>
<div class="t" style="left:223.20px;top:303.17px;font-size:8.6px;line-height:11px;color:#363636">руб.</div>
<div class="t" style="left:280.70px;top:303.17px;font-size:8.6px;line-height:11px;color:#363636">Проведен</div>
<div class="t" style="left:389.00px;top:303.17px;font-size:8.6px;line-height:11px;color:#363636">Основной склад</div>
<div class="t" style="left:497.80px;top:303.17px;font-size:8.6px;line-height:11px;color:#363636">Товары</div>
<div class="a" style="left:674.30px;top:303.17px;width:106.80px;height:11px;overflow:hidden"><div class="t" style="left:0.7px;top:0;font-size:8.6px;line-height:11px;color:#363636">Торговый дом "Комплексный"</div></div>
<div class="t" style="left:784.00px;top:303.17px;font-size:8.6px;line-height:11px;color:#363636">22.01.2015</div>
<div class="t" style="left:862.00px;top:303.17px;width:89.20px;text-align:right;font-size:8.6px;line-height:11px;color:#363636">29131</div>
<div class="t" style="left:955.20px;top:303.17px;font-size:8.6px;line-height:11px;color:#363636">Нет</div>
<div class="t" style="left:167.00px;top:314.42px;width:27.80px;text-align:center;font-size:8.6px;line-height:11px;color:#404040">19</div>
<div class="a" style="left:195.55px;top:314.42px;width:23.90px;height:11px;overflow:hidden"><div class="t" style="right:0;top:0;font-size:8.6px;line-height:11px;color:#363636">1340,00</div></div>
<div class="t" style="left:223.20px;top:314.42px;font-size:8.6px;line-height:11px;color:#363636">руб.</div>
<div class="t" style="left:280.70px;top:314.42px;font-size:8.6px;line-height:11px;color:#363636">Проведен</div>
<div class="t" style="left:389.00px;top:314.42px;font-size:8.6px;line-height:11px;color:#363636">Основной склад</div>
<div class="t" style="left:497.80px;top:314.42px;font-size:8.6px;line-height:11px;color:#363636">Товары</div>
<div class="a" style="left:674.30px;top:314.42px;width:106.80px;height:11px;overflow:hidden"><div class="t" style="left:0.7px;top:0;font-size:8.6px;line-height:11px;color:#363636">Торговый дом "Комплексный"</div></div>
<div class="t" style="left:784.00px;top:314.42px;font-size:8.6px;line-height:11px;color:#363636">27.01.2015</div>
<div class="t" style="left:862.00px;top:314.42px;width:89.20px;text-align:right;font-size:8.6px;line-height:11px;color:#363636">47997</div>
<div class="t" style="left:955.20px;top:314.42px;font-size:8.6px;line-height:11px;color:#363636">Нет</div>
<div class="t" style="left:167.00px;top:325.67px;width:27.80px;text-align:center;font-size:8.6px;line-height:11px;color:#404040">20</div>
<div class="a" style="left:195.55px;top:325.67px;width:23.90px;height:11px;overflow:hidden"><div class="t" style="right:0;top:0;font-size:8.6px;line-height:11px;color:#363636">1425,00</div></div>
<div class="t" style="left:223.20px;top:325.67px;font-size:8.6px;line-height:11px;color:#363636">руб.</div>
<div class="t" style="left:280.70px;top:325.67px;font-size:8.6px;line-height:11px;color:#363636">Проведен</div>
<div class="t" style="left:389.00px;top:325.67px;font-size:8.6px;line-height:11px;color:#363636">Основной склад</div>
<div class="t" style="left:497.80px;top:325.67px;font-size:8.6px;line-height:11px;color:#363636">Товары</div>
<div class="a" style="left:674.30px;top:325.67px;width:106.80px;height:11px;overflow:hidden"><div class="t" style="left:0.7px;top:0;font-size:8.6px;line-height:11px;color:#363636">Торговый дом "Комплексный"</div></div>
<div class="t" style="left:784.00px;top:325.67px;font-size:8.6px;line-height:11px;color:#363636">25.01.2015</div>
<div class="t" style="left:862.00px;top:325.67px;width:89.20px;text-align:right;font-size:8.6px;line-height:11px;color:#363636">6336</div>
<div class="t" style="left:955.20px;top:325.67px;font-size:8.6px;line-height:11px;color:#363636">Нет</div>
<div class="t" style="left:167.00px;top:336.92px;width:27.80px;text-align:center;font-size:8.6px;line-height:11px;color:#404040">21</div>
<div class="a" style="left:195.55px;top:336.92px;width:23.90px;height:11px;overflow:hidden"><div class="t" style="right:0;top:0;font-size:8.6px;line-height:11px;color:#363636">1900,00</div></div>
<div class="t" style="left:223.20px;top:336.92px;font-size:8.6px;line-height:11px;color:#363636">руб.</div>
<div class="t" style="left:280.70px;top:336.92px;font-size:8.6px;line-height:11px;color:#363636">Проведен</div>
<div class="t" style="left:389.00px;top:336.92px;font-size:8.6px;line-height:11px;color:#363636">Основной склад</div>
<div class="t" style="left:497.80px;top:336.92px;font-size:8.6px;line-height:11px;color:#363636">Товары</div>
<div class="a" style="left:674.30px;top:336.92px;width:106.80px;height:11px;overflow:hidden"><div class="t" style="left:0.7px;top:0;font-size:8.6px;line-height:11px;color:#363636">Торговый дом "Комплексный"</div></div>
<div class="t" style="left:784.00px;top:336.92px;font-size:8.6px;line-height:11px;color:#363636">29.01.2015</div>
<div class="t" style="left:862.00px;top:336.92px;width:89.20px;text-align:right;font-size:8.6px;line-height:11px;color:#363636">49279</div>
<div class="t" style="left:955.20px;top:336.92px;font-size:8.6px;line-height:11px;color:#363636">Нет</div>
<div class="t" style="left:167.00px;top:348.17px;width:27.80px;text-align:center;font-size:8.6px;line-height:11px;color:#404040">22</div>
<div class="a" style="left:195.55px;top:348.17px;width:23.90px;height:11px;overflow:hidden"><div class="t" style="right:0;top:0;font-size:8.6px;line-height:11px;color:#363636">1200,00</div></div>
<div class="t" style="left:223.20px;top:348.17px;font-size:8.6px;line-height:11px;color:#363636">руб.</div>
<div class="t" style="left:280.70px;top:348.17px;font-size:8.6px;line-height:11px;color:#363636">Проведен</div>
<div class="t" style="left:389.00px;top:348.17px;font-size:8.6px;line-height:11px;color:#363636">Основной склад</div>
<div class="t" style="left:497.80px;top:348.17px;font-size:8.6px;line-height:11px;color:#363636">Товары</div>
<div class="a" style="left:674.30px;top:348.17px;width:106.80px;height:11px;overflow:hidden"><div class="t" style="left:0.7px;top:0;font-size:8.6px;line-height:11px;color:#363636">Торговый дом "Комплексный"</div></div>
<div class="t" style="left:784.00px;top:348.17px;font-size:8.6px;line-height:11px;color:#363636">30.01.2015</div>
<div class="t" style="left:862.00px;top:348.17px;width:89.20px;text-align:right;font-size:8.6px;line-height:11px;color:#363636">17676</div>
<div class="t" style="left:955.20px;top:348.17px;font-size:8.6px;line-height:11px;color:#363636">Нет</div>
<div class="t" style="left:167.00px;top:359.42px;width:27.80px;text-align:center;font-size:8.6px;line-height:11px;color:#404040">23</div>
<div class="a" style="left:195.55px;top:359.42px;width:23.90px;height:11px;overflow:hidden"><div class="t" style="right:0;top:0;font-size:8.6px;line-height:11px;color:#363636">1120,00</div></div>
<div class="t" style="left:223.20px;top:359.42px;font-size:8.6px;line-height:11px;color:#363636">руб.</div>
<div class="t" style="left:280.70px;top:359.42px;font-size:8.6px;line-height:11px;color:#363636">Проведен</div>
<div class="t" style="left:389.00px;top:359.42px;font-size:8.6px;line-height:11px;color:#363636">Основной склад</div>
<div class="t" style="left:497.80px;top:359.42px;font-size:8.6px;line-height:11px;color:#363636">Товары</div>
<div class="a" style="left:674.30px;top:359.42px;width:106.80px;height:11px;overflow:hidden"><div class="t" style="left:0.7px;top:0;font-size:8.6px;line-height:11px;color:#363636">Торговый дом "Комплексный"</div></div>
<div class="t" style="left:784.00px;top:359.42px;font-size:8.6px;line-height:11px;color:#363636">01.02.2015</div>
<div class="t" style="left:862.00px;top:359.42px;width:89.20px;text-align:right;font-size:8.6px;line-height:11px;color:#363636">9719</div>
<div class="t" style="left:955.20px;top:359.42px;font-size:8.6px;line-height:11px;color:#363636">Нет</div>
<div class="t" style="left:167.00px;top:370.67px;width:27.80px;text-align:center;font-size:8.6px;line-height:11px;color:#404040">24</div>
<div class="a" style="left:195.55px;top:370.67px;width:23.90px;height:11px;overflow:hidden"><div class="t" style="right:0;top:0;font-size:8.6px;line-height:11px;color:#363636">1280,00</div></div>
<div class="t" style="left:223.20px;top:370.67px;font-size:8.6px;line-height:11px;color:#363636">руб.</div>
<div class="t" style="left:280.70px;top:370.67px;font-size:8.6px;line-height:11px;color:#363636">Проведен</div>
<div class="t" style="left:389.00px;top:370.67px;font-size:8.6px;line-height:11px;color:#363636">Основной склад</div>
<div class="t" style="left:497.80px;top:370.67px;font-size:8.6px;line-height:11px;color:#363636">Товары</div>
<div class="a" style="left:674.30px;top:370.67px;width:106.80px;height:11px;overflow:hidden"><div class="t" style="left:0.7px;top:0;font-size:8.6px;line-height:11px;color:#363636">Торговый дом "Комплексный"</div></div>
<div class="t" style="left:784.00px;top:370.67px;font-size:8.6px;line-height:11px;color:#363636">01.02.2015</div>
<div class="t" style="left:862.00px;top:370.67px;width:89.20px;text-align:right;font-size:8.6px;line-height:11px;color:#363636">9464</div>
<div class="t" style="left:955.20px;top:370.67px;font-size:8.6px;line-height:11px;color:#363636">Нет</div>
<div class="t" style="left:167.00px;top:381.92px;width:27.80px;text-align:center;font-size:8.6px;line-height:11px;color:#404040">25</div>
<div class="a" style="left:195.55px;top:381.92px;width:23.90px;height:11px;overflow:hidden"><div class="t" style="right:0;top:0;font-size:8.6px;line-height:11px;color:#363636">1120,00</div></div>
<div class="t" style="left:223.20px;top:381.92px;font-size:8.6px;line-height:11px;color:#363636">руб.</div>
<div class="t" style="left:280.70px;top:381.92px;font-size:8.6px;line-height:11px;color:#363636">Проведен</div>
<div class="t" style="left:389.00px;top:381.92px;font-size:8.6px;line-height:11px;color:#363636">Основной склад</div>
<div class="t" style="left:497.80px;top:381.92px;font-size:8.6px;line-height:11px;color:#363636">Товары</div>
<div class="a" style="left:674.30px;top:381.92px;width:106.80px;height:11px;overflow:hidden"><div class="t" style="left:0.7px;top:0;font-size:8.6px;line-height:11px;color:#363636">Торговый дом "Комплексный"</div></div>
<div class="t" style="left:784.00px;top:381.92px;font-size:8.6px;line-height:11px;color:#363636">30.01.2015</div>
<div class="t" style="left:862.00px;top:381.92px;width:89.20px;text-align:right;font-size:8.6px;line-height:11px;color:#363636">33209</div>
<div class="t" style="left:955.20px;top:381.92px;font-size:8.6px;line-height:11px;color:#363636">Нет</div>
<div class="t" style="left:167.00px;top:393.17px;width:27.80px;text-align:center;font-size:8.6px;line-height:11px;color:#404040">26</div>
<div class="a" style="left:195.55px;top:393.17px;width:23.90px;height:11px;overflow:hidden"><div class="t" style="right:0;top:0;font-size:8.6px;line-height:11px;color:#363636">1340,00</div></div>
<div class="t" style="left:223.20px;top:393.17px;font-size:8.6px;line-height:11px;color:#363636">руб.</div>
<div class="t" style="left:280.70px;top:393.17px;font-size:8.6px;line-height:11px;color:#363636">Проведен</div>
<div class="t" style="left:389.00px;top:393.17px;font-size:8.6px;line-height:11px;color:#363636">Основной склад</div>
<div class="t" style="left:497.80px;top:393.17px;font-size:8.6px;line-height:11px;color:#363636">Товары</div>
<div class="a" style="left:674.30px;top:393.17px;width:106.80px;height:11px;overflow:hidden"><div class="t" style="left:0.7px;top:0;font-size:8.6px;line-height:11px;color:#363636">Торговый дом "Комплексный"</div></div>
<div class="t" style="left:784.00px;top:393.17px;font-size:8.6px;line-height:11px;color:#363636">02.02.2015</div>
<div class="t" style="left:862.00px;top:393.17px;width:89.20px;text-align:right;font-size:8.6px;line-height:11px;color:#363636">6153</div>
<div class="t" style="left:955.20px;top:393.17px;font-size:8.6px;line-height:11px;color:#363636">Нет</div>
<div class="t" style="left:167.00px;top:404.42px;width:27.80px;text-align:center;font-size:8.6px;line-height:11px;color:#404040">27</div>
<div class="a" style="left:195.55px;top:404.42px;width:23.90px;height:11px;overflow:hidden"><div class="t" style="right:0;top:0;font-size:8.6px;line-height:11px;color:#363636">1350,00</div></div>
<div class="t" style="left:223.20px;top:404.42px;font-size:8.6px;line-height:11px;color:#363636">руб.</div>
<div class="t" style="left:280.70px;top:404.42px;font-size:8.6px;line-height:11px;color:#363636">Проведен</div>
<div class="t" style="left:389.00px;top:404.42px;font-size:8.6px;line-height:11px;color:#363636">Основной склад</div>
<div class="t" style="left:497.80px;top:404.42px;font-size:8.6px;line-height:11px;color:#363636">Товары</div>
<div class="a" style="left:674.30px;top:404.42px;width:106.80px;height:11px;overflow:hidden"><div class="t" style="left:0.7px;top:0;font-size:8.6px;line-height:11px;color:#363636">Торговый дом "Комплексный"</div></div>
<div class="t" style="left:784.00px;top:404.42px;font-size:8.6px;line-height:11px;color:#363636">05.02.2015</div>
<div class="t" style="left:862.00px;top:404.42px;width:89.20px;text-align:right;font-size:8.6px;line-height:11px;color:#363636">48466</div>
<div class="t" style="left:955.20px;top:404.42px;font-size:8.6px;line-height:11px;color:#363636">Нет</div>
<div class="t" style="left:167.00px;top:415.67px;width:27.80px;text-align:center;font-size:8.6px;line-height:11px;color:#404040">28</div>
<div class="a" style="left:195.55px;top:415.67px;width:23.90px;height:11px;overflow:hidden"><div class="t" style="right:0;top:0;font-size:8.6px;line-height:11px;color:#363636">1325,00</div></div>
<div class="t" style="left:223.20px;top:415.67px;font-size:8.6px;line-height:11px;color:#363636">руб.</div>
<div class="t" style="left:280.70px;top:415.67px;font-size:8.6px;line-height:11px;color:#363636">Проведен</div>
<div class="t" style="left:389.00px;top:415.67px;font-size:8.6px;line-height:11px;color:#363636">Основной склад</div>
<div class="t" style="left:497.80px;top:415.67px;font-size:8.6px;line-height:11px;color:#363636">Товары</div>
<div class="a" style="left:674.30px;top:415.67px;width:106.80px;height:11px;overflow:hidden"><div class="t" style="left:0.7px;top:0;font-size:8.6px;line-height:11px;color:#363636">Торговый дом "Комплексный"</div></div>
<div class="t" style="left:784.00px;top:415.67px;font-size:8.6px;line-height:11px;color:#363636">05.02.2015</div>
<div class="t" style="left:862.00px;top:415.67px;width:89.20px;text-align:right;font-size:8.6px;line-height:11px;color:#363636">17438</div>
<div class="t" style="left:955.20px;top:415.67px;font-size:8.6px;line-height:11px;color:#363636">Нет</div>
<div class="t" style="left:167.00px;top:426.92px;width:27.80px;text-align:center;font-size:8.6px;line-height:11px;color:#404040">29</div>
<div class="a" style="left:195.55px;top:426.92px;width:23.90px;height:11px;overflow:hidden"><div class="t" style="right:0;top:0;font-size:8.6px;line-height:11px;color:#363636">1360,00</div></div>
<div class="t" style="left:223.20px;top:426.92px;font-size:8.6px;line-height:11px;color:#363636">руб.</div>
<div class="t" style="left:280.70px;top:426.92px;font-size:8.6px;line-height:11px;color:#363636">Проведен</div>
<div class="t" style="left:389.00px;top:426.92px;font-size:8.6px;line-height:11px;color:#363636">Основной склад</div>
<div class="t" style="left:497.80px;top:426.92px;font-size:8.6px;line-height:11px;color:#363636">Товары</div>
<div class="a" style="left:674.30px;top:426.92px;width:106.80px;height:11px;overflow:hidden"><div class="t" style="left:0.7px;top:0;font-size:8.6px;line-height:11px;color:#363636">Торговый дом "Комплексный"</div></div>
<div class="t" style="left:784.00px;top:426.92px;font-size:8.6px;line-height:11px;color:#363636">08.02.2015</div>
<div class="t" style="left:862.00px;top:426.92px;width:89.20px;text-align:right;font-size:8.6px;line-height:11px;color:#363636">30645</div>
<div class="t" style="left:955.20px;top:426.92px;font-size:8.6px;line-height:11px;color:#363636">Нет</div>
<div class="t" style="left:167.00px;top:438.17px;width:27.80px;text-align:center;font-size:8.6px;line-height:11px;color:#404040">30</div>
<div class="a" style="left:195.55px;top:438.17px;width:23.90px;height:11px;overflow:hidden"><div class="t" style="right:0;top:0;font-size:8.6px;line-height:11px;color:#363636">1305,00</div></div>
<div class="t" style="left:223.20px;top:438.17px;font-size:8.6px;line-height:11px;color:#363636">руб.</div>
<div class="t" style="left:280.70px;top:438.17px;font-size:8.6px;line-height:11px;color:#363636">Проведен</div>
<div class="t" style="left:389.00px;top:438.17px;font-size:8.6px;line-height:11px;color:#363636">Основной склад</div>
<div class="t" style="left:497.80px;top:438.17px;font-size:8.6px;line-height:11px;color:#363636">Товары</div>
<div class="a" style="left:674.30px;top:438.17px;width:106.80px;height:11px;overflow:hidden"><div class="t" style="left:0.7px;top:0;font-size:8.6px;line-height:11px;color:#363636">Торговый дом "Комплексный"</div></div>
<div class="t" style="left:784.00px;top:438.17px;font-size:8.6px;line-height:11px;color:#363636">09.02.2015</div>
<div class="t" style="left:862.00px;top:438.17px;width:89.20px;text-align:right;font-size:8.6px;line-height:11px;color:#363636">3648</div>
<div class="t" style="left:955.20px;top:438.17px;font-size:8.6px;line-height:11px;color:#363636">Нет</div>
<div class="t" style="left:167.00px;top:449.42px;width:27.80px;text-align:center;font-size:8.6px;line-height:11px;color:#404040">31</div>
<div class="a" style="left:195.55px;top:449.42px;width:23.90px;height:11px;overflow:hidden"><div class="t" style="right:0;top:0;font-size:8.6px;line-height:11px;color:#363636">1045,00</div></div>
<div class="t" style="left:223.20px;top:449.42px;font-size:8.6px;line-height:11px;color:#363636">руб.</div>
<div class="t" style="left:280.70px;top:449.42px;font-size:8.6px;line-height:11px;color:#363636">Проведен</div>
<div class="t" style="left:389.00px;top:449.42px;font-size:8.6px;line-height:11px;color:#363636">Основной склад</div>
<div class="t" style="left:497.80px;top:449.42px;font-size:8.6px;line-height:11px;color:#363636">Товары</div>
<div class="a" style="left:674.30px;top:449.42px;width:106.80px;height:11px;overflow:hidden"><div class="t" style="left:0.7px;top:0;font-size:8.6px;line-height:11px;color:#363636">Торговый дом "Комплексный"</div></div>
<div class="t" style="left:784.00px;top:449.42px;font-size:8.6px;line-height:11px;color:#363636">09.02.2015</div>
<div class="t" style="left:862.00px;top:449.42px;width:89.20px;text-align:right;font-size:8.6px;line-height:11px;color:#363636">6131</div>
<div class="t" style="left:955.20px;top:449.42px;font-size:8.6px;line-height:11px;color:#363636">Нет</div>
<div class="t" style="left:167.00px;top:460.67px;width:27.80px;text-align:center;font-size:8.6px;line-height:11px;color:#404040">32</div>
<div class="a" style="left:195.55px;top:460.67px;width:23.90px;height:11px;overflow:hidden"><div class="t" style="right:0;top:0;font-size:8.6px;line-height:11px;color:#363636">1125,00</div></div>
<div class="t" style="left:223.20px;top:460.67px;font-size:8.6px;line-height:11px;color:#363636">руб.</div>
<div class="t" style="left:280.70px;top:460.67px;font-size:8.6px;line-height:11px;color:#363636">Проведен</div>
<div class="t" style="left:389.00px;top:460.67px;font-size:8.6px;line-height:11px;color:#363636">Основной склад</div>
<div class="t" style="left:497.80px;top:460.67px;font-size:8.6px;line-height:11px;color:#363636">Товары</div>
<div class="a" style="left:674.30px;top:460.67px;width:106.80px;height:11px;overflow:hidden"><div class="t" style="left:0.7px;top:0;font-size:8.6px;line-height:11px;color:#363636">Торговый дом "Комплексный"</div></div>
<div class="t" style="left:784.00px;top:460.67px;font-size:8.6px;line-height:11px;color:#363636">13.02.2015</div>
<div class="t" style="left:862.00px;top:460.67px;width:89.20px;text-align:right;font-size:8.6px;line-height:11px;color:#363636">28434</div>
<div class="t" style="left:955.20px;top:460.67px;font-size:8.6px;line-height:11px;color:#363636">Нет</div>
<div class="t" style="left:167.00px;top:471.92px;width:27.80px;text-align:center;font-size:8.6px;line-height:11px;color:#404040">33</div>
<div class="a" style="left:195.55px;top:471.92px;width:23.90px;height:11px;overflow:hidden"><div class="t" style="right:0;top:0;font-size:8.6px;line-height:11px;color:#363636">1135,00</div></div>
<div class="t" style="left:223.20px;top:471.92px;font-size:8.6px;line-height:11px;color:#363636">руб.</div>
<div class="t" style="left:280.70px;top:471.92px;font-size:8.6px;line-height:11px;color:#363636">Проведен</div>
<div class="t" style="left:389.00px;top:471.92px;font-size:8.6px;line-height:11px;color:#363636">Основной склад</div>
<div class="t" style="left:497.80px;top:471.92px;font-size:8.6px;line-height:11px;color:#363636">Товары</div>
<div class="a" style="left:674.30px;top:471.92px;width:106.80px;height:11px;overflow:hidden"><div class="t" style="left:0.7px;top:0;font-size:8.6px;line-height:11px;color:#363636">Торговый дом "Комплексный"</div></div>
<div class="t" style="left:784.00px;top:471.92px;font-size:8.6px;line-height:11px;color:#363636">15.02.2015</div>
<div class="t" style="left:862.00px;top:471.92px;width:89.20px;text-align:right;font-size:8.6px;line-height:11px;color:#363636">22782</div>
<div class="t" style="left:955.20px;top:471.92px;font-size:8.6px;line-height:11px;color:#363636">Нет</div>
<div class="t" style="left:167.00px;top:483.17px;width:27.80px;text-align:center;font-size:8.6px;line-height:11px;color:#404040">34</div>
<div class="a" style="left:195.55px;top:483.17px;width:23.90px;height:11px;overflow:hidden"><div class="t" style="right:0;top:0;font-size:8.6px;line-height:11px;color:#363636">1365,00</div></div>
<div class="t" style="left:223.20px;top:483.17px;font-size:8.6px;line-height:11px;color:#363636">руб.</div>
<div class="t" style="left:280.70px;top:483.17px;font-size:8.6px;line-height:11px;color:#363636">Проведен</div>
<div class="t" style="left:389.00px;top:483.17px;font-size:8.6px;line-height:11px;color:#363636">Основной склад</div>
<div class="t" style="left:497.80px;top:483.17px;font-size:8.6px;line-height:11px;color:#363636">Товары</div>
<div class="a" style="left:674.30px;top:483.17px;width:106.80px;height:11px;overflow:hidden"><div class="t" style="left:0.7px;top:0;font-size:8.6px;line-height:11px;color:#363636">Торговый дом "Комплексный"</div></div>
<div class="t" style="left:784.00px;top:483.17px;font-size:8.6px;line-height:11px;color:#363636">13.02.2015</div>
<div class="t" style="left:862.00px;top:483.17px;width:89.20px;text-align:right;font-size:8.6px;line-height:11px;color:#363636">4368</div>
<div class="t" style="left:955.20px;top:483.17px;font-size:8.6px;line-height:11px;color:#363636">Нет</div>
<div class="t" style="left:167.00px;top:494.42px;width:27.80px;text-align:center;font-size:8.6px;line-height:11px;color:#404040">35</div>
<div class="a" style="left:195.55px;top:494.42px;width:23.90px;height:11px;overflow:hidden"><div class="t" style="right:0;top:0;font-size:8.6px;line-height:11px;color:#363636">1635,00</div></div>
<div class="t" style="left:223.20px;top:494.42px;font-size:8.6px;line-height:11px;color:#363636">руб.</div>
<div class="t" style="left:280.70px;top:494.42px;font-size:8.6px;line-height:11px;color:#363636">Проведен</div>
<div class="t" style="left:389.00px;top:494.42px;font-size:8.6px;line-height:11px;color:#363636">Основной склад</div>
<div class="t" style="left:497.80px;top:494.42px;font-size:8.6px;line-height:11px;color:#363636">Товары</div>
<div class="a" style="left:674.30px;top:494.42px;width:106.80px;height:11px;overflow:hidden"><div class="t" style="left:0.7px;top:0;font-size:8.6px;line-height:11px;color:#363636">Торговый дом "Комплексный"</div></div>
<div class="t" style="left:784.00px;top:494.42px;font-size:8.6px;line-height:11px;color:#363636">13.02.2015</div>
<div class="t" style="left:862.00px;top:494.42px;width:89.20px;text-align:right;font-size:8.6px;line-height:11px;color:#363636">43238</div>
<div class="t" style="left:955.20px;top:494.42px;font-size:8.6px;line-height:11px;color:#363636">Нет</div>
<div class="t" style="left:167.00px;top:505.67px;width:27.80px;text-align:center;font-size:8.6px;line-height:11px;color:#404040">36</div>
<div class="a" style="left:195.55px;top:505.67px;width:23.90px;height:11px;overflow:hidden"><div class="t" style="right:0;top:0;font-size:8.6px;line-height:11px;color:#363636">1320,00</div></div>
<div class="t" style="left:223.20px;top:505.67px;font-size:8.6px;line-height:11px;color:#363636">руб.</div>
<div class="t" style="left:280.70px;top:505.67px;font-size:8.6px;line-height:11px;color:#363636">Проведен</div>
<div class="t" style="left:389.00px;top:505.67px;font-size:8.6px;line-height:11px;color:#363636">Основной склад</div>
<div class="t" style="left:497.80px;top:505.67px;font-size:8.6px;line-height:11px;color:#363636">Товары</div>
<div class="a" style="left:674.30px;top:505.67px;width:106.80px;height:11px;overflow:hidden"><div class="t" style="left:0.7px;top:0;font-size:8.6px;line-height:11px;color:#363636">Торговый дом "Комплексный"</div></div>
<div class="t" style="left:784.00px;top:505.67px;font-size:8.6px;line-height:11px;color:#363636">13.02.2015</div>
<div class="t" style="left:862.00px;top:505.67px;width:89.20px;text-align:right;font-size:8.6px;line-height:11px;color:#363636">23122</div>
<div class="t" style="left:955.20px;top:505.67px;font-size:8.6px;line-height:11px;color:#363636">Нет</div>
<div class="t" style="left:167.00px;top:516.92px;width:27.80px;text-align:center;font-size:8.6px;line-height:11px;color:#404040">37</div>
<div class="a" style="left:195.55px;top:516.92px;width:23.90px;height:11px;overflow:hidden"><div class="t" style="right:0;top:0;font-size:8.6px;line-height:11px;color:#363636">1360,00</div></div>
<div class="t" style="left:223.20px;top:516.92px;font-size:8.6px;line-height:11px;color:#363636">руб.</div>
<div class="t" style="left:280.70px;top:516.92px;font-size:8.6px;line-height:11px;color:#363636">Проведен</div>
<div class="t" style="left:389.00px;top:516.92px;font-size:8.6px;line-height:11px;color:#363636">Основной склад</div>
<div class="t" style="left:497.80px;top:516.92px;font-size:8.6px;line-height:11px;color:#363636">Товары</div>
<div class="a" style="left:674.30px;top:516.92px;width:106.80px;height:11px;overflow:hidden"><div class="t" style="left:0.7px;top:0;font-size:8.6px;line-height:11px;color:#363636">Торговый дом "Комплексный"</div></div>
<div class="t" style="left:784.00px;top:516.92px;font-size:8.6px;line-height:11px;color:#363636">17.02.2015</div>
<div class="t" style="left:862.00px;top:516.92px;width:89.20px;text-align:right;font-size:8.6px;line-height:11px;color:#363636">27274</div>
<div class="t" style="left:955.20px;top:516.92px;font-size:8.6px;line-height:11px;color:#363636">Нет</div>
<div class="t" style="left:167.00px;top:528.17px;width:27.80px;text-align:center;font-size:8.6px;line-height:11px;color:#404040">38</div>
<div class="a" style="left:195.55px;top:528.17px;width:23.90px;height:11px;overflow:hidden"><div class="t" style="right:0;top:0;font-size:8.6px;line-height:11px;color:#363636">1310,00</div></div>
<div class="t" style="left:223.20px;top:528.17px;font-size:8.6px;line-height:11px;color:#363636">руб.</div>
<div class="t" style="left:280.70px;top:528.17px;font-size:8.6px;line-height:11px;color:#363636">Проведен</div>
<div class="t" style="left:389.00px;top:528.17px;font-size:8.6px;line-height:11px;color:#363636">Основной склад</div>
<div class="t" style="left:497.80px;top:528.17px;font-size:8.6px;line-height:11px;color:#363636">Товары</div>
<div class="a" style="left:674.30px;top:528.17px;width:106.80px;height:11px;overflow:hidden"><div class="t" style="left:0.7px;top:0;font-size:8.6px;line-height:11px;color:#363636">Торговый дом "Комплексный"</div></div>
<div class="t" style="left:784.00px;top:528.17px;font-size:8.6px;line-height:11px;color:#363636">18.02.2015</div>
<div class="t" style="left:862.00px;top:528.17px;width:89.20px;text-align:right;font-size:8.6px;line-height:11px;color:#363636">49151</div>
<div class="t" style="left:955.20px;top:528.17px;font-size:8.6px;line-height:11px;color:#363636">Нет</div>
<div class="t" style="left:167.00px;top:539.42px;width:27.80px;text-align:center;font-size:8.6px;line-height:11px;color:#404040">39</div>
<div class="a" style="left:195.55px;top:539.42px;width:23.90px;height:11px;overflow:hidden"><div class="t" style="right:0;top:0;font-size:8.6px;line-height:11px;color:#363636">1340,00</div></div>
<div class="t" style="left:223.20px;top:539.42px;font-size:8.6px;line-height:11px;color:#363636">руб.</div>
<div class="t" style="left:280.70px;top:539.42px;font-size:8.6px;line-height:11px;color:#363636">Проведен</div>
<div class="t" style="left:389.00px;top:539.42px;font-size:8.6px;line-height:11px;color:#363636">Основной склад</div>
<div class="t" style="left:497.80px;top:539.42px;font-size:8.6px;line-height:11px;color:#363636">Товары</div>
<div class="a" style="left:674.30px;top:539.42px;width:106.80px;height:11px;overflow:hidden"><div class="t" style="left:0.7px;top:0;font-size:8.6px;line-height:11px;color:#363636">Торговый дом "Комплексный"</div></div>
<div class="t" style="left:784.00px;top:539.42px;font-size:8.6px;line-height:11px;color:#363636">19.02.2015</div>
<div class="t" style="left:862.00px;top:539.42px;width:89.20px;text-align:right;font-size:8.6px;line-height:11px;color:#363636">17451</div>
<div class="t" style="left:955.20px;top:539.42px;font-size:8.6px;line-height:11px;color:#363636">Нет</div>
<div class="t" style="left:167.00px;top:550.67px;width:27.80px;text-align:center;font-size:8.6px;line-height:11px;color:#404040">40</div>
<div class="a" style="left:195.55px;top:550.67px;width:23.90px;height:11px;overflow:hidden"><div class="t" style="right:0;top:0;font-size:8.6px;line-height:11px;color:#363636">1040,00</div></div>
<div class="t" style="left:223.20px;top:550.67px;font-size:8.6px;line-height:11px;color:#363636">руб.</div>
<div class="t" style="left:280.70px;top:550.67px;font-size:8.6px;line-height:11px;color:#363636">Проведен</div>
<div class="t" style="left:389.00px;top:550.67px;font-size:8.6px;line-height:11px;color:#363636">Основной склад</div>
<div class="t" style="left:497.80px;top:550.67px;font-size:8.6px;line-height:11px;color:#363636">Товары</div>
<div class="a" style="left:674.30px;top:550.67px;width:106.80px;height:11px;overflow:hidden"><div class="t" style="left:0.7px;top:0;font-size:8.6px;line-height:11px;color:#363636">Торговый дом "Комплексный"</div></div>
<div class="t" style="left:784.00px;top:550.67px;font-size:8.6px;line-height:11px;color:#363636">22.02.2015</div>
<div class="t" style="left:862.00px;top:550.67px;width:89.20px;text-align:right;font-size:8.6px;line-height:11px;color:#363636">12812</div>
<div class="t" style="left:955.20px;top:550.67px;font-size:8.6px;line-height:11px;color:#363636">Нет</div>
<div class="t" style="left:167.00px;top:561.92px;width:27.80px;text-align:center;font-size:8.6px;line-height:11px;color:#404040">41</div>
<div class="a" style="left:195.55px;top:561.92px;width:23.90px;height:11px;overflow:hidden"><div class="t" style="right:0;top:0;font-size:8.6px;line-height:11px;color:#363636">1300,00</div></div>
<div class="t" style="left:223.20px;top:561.92px;font-size:8.6px;line-height:11px;color:#363636">руб.</div>
<div class="t" style="left:280.70px;top:561.92px;font-size:8.6px;line-height:11px;color:#363636">Проведен</div>
<div class="t" style="left:389.00px;top:561.92px;font-size:8.6px;line-height:11px;color:#363636">Основной склад</div>
<div class="t" style="left:497.80px;top:561.92px;font-size:8.6px;line-height:11px;color:#363636">Товары</div>
<div class="a" style="left:674.30px;top:561.92px;width:106.80px;height:11px;overflow:hidden"><div class="t" style="left:0.7px;top:0;font-size:8.6px;line-height:11px;color:#363636">Торговый дом "Комплексный"</div></div>
<div class="t" style="left:784.00px;top:561.92px;font-size:8.6px;line-height:11px;color:#363636">20.02.2015</div>
<div class="t" style="left:862.00px;top:561.92px;width:89.20px;text-align:right;font-size:8.6px;line-height:11px;color:#363636">25113</div>
<div class="t" style="left:955.20px;top:561.92px;font-size:8.6px;line-height:11px;color:#363636">Нет</div>
<div class="t" style="left:167.00px;top:573.17px;width:27.80px;text-align:center;font-size:8.6px;line-height:11px;color:#404040">42</div>
<div class="a" style="left:195.55px;top:573.17px;width:23.90px;height:11px;overflow:hidden"><div class="t" style="right:0;top:0;font-size:8.6px;line-height:11px;color:#363636">1735,00</div></div>
<div class="t" style="left:223.20px;top:573.17px;font-size:8.6px;line-height:11px;color:#363636">руб.</div>
<div class="t" style="left:280.70px;top:573.17px;font-size:8.6px;line-height:11px;color:#363636">Проведен</div>
<div class="t" style="left:389.00px;top:573.17px;font-size:8.6px;line-height:11px;color:#363636">Основной склад</div>
<div class="t" style="left:497.80px;top:573.17px;font-size:8.6px;line-height:11px;color:#363636">Товары</div>
<div class="a" style="left:674.30px;top:573.17px;width:106.80px;height:11px;overflow:hidden"><div class="t" style="left:0.7px;top:0;font-size:8.6px;line-height:11px;color:#363636">Торговый дом "Комплексный"</div></div>
<div class="t" style="left:784.00px;top:573.17px;font-size:8.6px;line-height:11px;color:#363636">21.02.2015</div>
<div class="t" style="left:862.00px;top:573.17px;width:89.20px;text-align:right;font-size:8.6px;line-height:11px;color:#363636">11378</div>
<div class="t" style="left:955.20px;top:573.17px;font-size:8.6px;line-height:11px;color:#363636">Нет</div>
<div class="t" style="left:167.00px;top:584.42px;width:27.80px;text-align:center;font-size:8.6px;line-height:11px;color:#404040">43</div>
<div class="a" style="left:195.55px;top:584.42px;width:23.90px;height:11px;overflow:hidden"><div class="t" style="right:0;top:0;font-size:8.6px;line-height:11px;color:#363636">1440,00</div></div>
<div class="t" style="left:223.20px;top:584.42px;font-size:8.6px;line-height:11px;color:#363636">руб.</div>
<div class="t" style="left:280.70px;top:584.42px;font-size:8.6px;line-height:11px;color:#363636">Проведен</div>
<div class="t" style="left:389.00px;top:584.42px;font-size:8.6px;line-height:11px;color:#363636">Основной склад</div>
<div class="t" style="left:497.80px;top:584.42px;font-size:8.6px;line-height:11px;color:#363636">Товары</div>
<div class="a" style="left:674.30px;top:584.42px;width:106.80px;height:11px;overflow:hidden"><div class="t" style="left:0.7px;top:0;font-size:8.6px;line-height:11px;color:#363636">Торговый дом "Комплексный"</div></div>
<div class="t" style="left:784.00px;top:584.42px;font-size:8.6px;line-height:11px;color:#363636">24.02.2015</div>
<div class="t" style="left:862.00px;top:584.42px;width:89.20px;text-align:right;font-size:8.6px;line-height:11px;color:#363636">33609</div>
<div class="t" style="left:955.20px;top:584.42px;font-size:8.6px;line-height:11px;color:#363636">Нет</div>
<div class="t" style="left:167.00px;top:595.67px;width:27.80px;text-align:center;font-size:8.6px;line-height:11px;color:#404040">44</div>
<div class="a" style="left:195.55px;top:595.67px;width:23.90px;height:11px;overflow:hidden"><div class="t" style="right:0;top:0;font-size:8.6px;line-height:11px;color:#363636">1220,00</div></div>
<div class="t" style="left:223.20px;top:595.67px;font-size:8.6px;line-height:11px;color:#363636">руб.</div>
<div class="t" style="left:280.70px;top:595.67px;font-size:8.6px;line-height:11px;color:#363636">Проведен</div>
<div class="t" style="left:389.00px;top:595.67px;font-size:8.6px;line-height:11px;color:#363636">Основной склад</div>
<div class="t" style="left:497.80px;top:595.67px;font-size:8.6px;line-height:11px;color:#363636">Товары</div>
<div class="a" style="left:674.30px;top:595.67px;width:106.80px;height:11px;overflow:hidden"><div class="t" style="left:0.7px;top:0;font-size:8.6px;line-height:11px;color:#363636">Торговый дом "Комплексный"</div></div>
<div class="t" style="left:784.00px;top:595.67px;font-size:8.6px;line-height:11px;color:#363636">25.02.2015</div>
<div class="t" style="left:862.00px;top:595.67px;width:89.20px;text-align:right;font-size:8.6px;line-height:11px;color:#363636">4619</div>
<div class="t" style="left:955.20px;top:595.67px;font-size:8.6px;line-height:11px;color:#363636">Нет</div>
<div class="t" style="left:167.00px;top:606.92px;width:27.80px;text-align:center;font-size:8.6px;line-height:11px;color:#404040">45</div>
<div class="a" style="left:195.55px;top:606.92px;width:23.90px;height:11px;overflow:hidden"><div class="t" style="right:0;top:0;font-size:8.6px;line-height:11px;color:#363636">1160,00</div></div>
<div class="t" style="left:223.20px;top:606.92px;font-size:8.6px;line-height:11px;color:#363636">руб.</div>
<div class="t" style="left:280.70px;top:606.92px;font-size:8.6px;line-height:11px;color:#363636">Проведен</div>
<div class="t" style="left:389.00px;top:606.92px;font-size:8.6px;line-height:11px;color:#363636">Основной склад</div>
<div class="t" style="left:497.80px;top:606.92px;font-size:8.6px;line-height:11px;color:#363636">Товары</div>
<div class="a" style="left:674.30px;top:606.92px;width:106.80px;height:11px;overflow:hidden"><div class="t" style="left:0.7px;top:0;font-size:8.6px;line-height:11px;color:#363636">Торговый дом "Комплексный"</div></div>
<div class="t" style="left:784.00px;top:606.92px;font-size:8.6px;line-height:11px;color:#363636">26.02.2015</div>
<div class="t" style="left:862.00px;top:606.92px;width:89.20px;text-align:right;font-size:8.6px;line-height:11px;color:#363636">23783</div>
<div class="t" style="left:955.20px;top:606.92px;font-size:8.6px;line-height:11px;color:#363636">Нет</div>
<div class="t" style="left:167.00px;top:618.17px;width:27.80px;text-align:center;font-size:8.6px;line-height:11px;color:#404040">46</div>
<div class="a" style="left:195.55px;top:618.17px;width:23.90px;height:11px;overflow:hidden"><div class="t" style="right:0;top:0;font-size:8.6px;line-height:11px;color:#363636">1975,00</div></div>
<div class="t" style="left:223.20px;top:618.17px;font-size:8.6px;line-height:11px;color:#363636">руб.</div>
<div class="t" style="left:280.70px;top:618.17px;font-size:8.6px;line-height:11px;color:#363636">Проведен</div>
<div class="t" style="left:389.00px;top:618.17px;font-size:8.6px;line-height:11px;color:#363636">Основной склад</div>
<div class="t" style="left:497.80px;top:618.17px;font-size:8.6px;line-height:11px;color:#363636">Товары</div>
<div class="a" style="left:674.30px;top:618.17px;width:106.80px;height:11px;overflow:hidden"><div class="t" style="left:0.7px;top:0;font-size:8.6px;line-height:11px;color:#363636">Торговый дом "Комплексный"</div></div>
<div class="t" style="left:784.00px;top:618.17px;font-size:8.6px;line-height:11px;color:#363636">25.02.2015</div>
<div class="t" style="left:862.00px;top:618.17px;width:89.20px;text-align:right;font-size:8.6px;line-height:11px;color:#363636">41697</div>
<div class="t" style="left:955.20px;top:618.17px;font-size:8.6px;line-height:11px;color:#363636">Нет</div>
<div class="t" style="left:167.00px;top:629.42px;width:27.80px;text-align:center;font-size:8.6px;line-height:11px;color:#404040">47</div>
<div class="a" style="left:195.55px;top:629.42px;width:23.90px;height:11px;overflow:hidden"><div class="t" style="right:0;top:0;font-size:8.6px;line-height:11px;color:#363636">1278,98</div></div>
<div class="t" style="left:223.20px;top:629.42px;font-size:8.6px;line-height:11px;color:#363636">USD</div>
<div class="t" style="left:280.70px;top:629.42px;font-size:8.6px;line-height:11px;color:#363636">Проведен</div>
<div class="t" style="left:389.00px;top:629.42px;font-size:8.6px;line-height:11px;color:#363636">Основной склад</div>
<div class="t" style="left:497.80px;top:629.42px;font-size:8.6px;line-height:11px;color:#363636">Товары</div>
<div class="a" style="left:674.30px;top:629.42px;width:106.80px;height:11px;overflow:hidden"><div class="t" style="left:0.7px;top:0;font-size:8.6px;line-height:11px;color:#363636">Торговый дом "Комплексный"</div></div>
<div class="t" style="left:784.00px;top:629.42px;font-size:8.6px;line-height:11px;color:#363636">26.02.2015</div>
<div class="t" style="left:862.00px;top:629.42px;width:89.20px;text-align:right;font-size:8.6px;line-height:11px;color:#363636">35174</div>
<div class="t" style="left:955.20px;top:629.42px;font-size:8.6px;line-height:11px;color:#363636">Нет</div>
<div class="t" style="left:167.00px;top:640.67px;width:27.80px;text-align:center;font-size:8.6px;line-height:11px;color:#404040">48</div>
<div class="a" style="left:195.55px;top:640.67px;width:23.90px;height:11px;overflow:hidden"><div class="t" style="right:0;top:0;font-size:8.6px;line-height:11px;color:#363636">1930,00</div></div>
<div class="t" style="left:223.20px;top:640.67px;font-size:8.6px;line-height:11px;color:#363636">руб.</div>
<div class="t" style="left:280.70px;top:640.67px;font-size:8.6px;line-height:11px;color:#363636">Проведен</div>
<div class="t" style="left:389.00px;top:640.67px;font-size:8.6px;line-height:11px;color:#363636">Основной склад</div>
<div class="t" style="left:497.80px;top:640.67px;font-size:8.6px;line-height:11px;color:#363636">Товары</div>
<div class="a" style="left:674.30px;top:640.67px;width:106.80px;height:11px;overflow:hidden"><div class="t" style="left:0.7px;top:0;font-size:8.6px;line-height:11px;color:#363636">Торговый дом "Комплексный"</div></div>
<div class="t" style="left:784.00px;top:640.67px;font-size:8.6px;line-height:11px;color:#363636">03.03.2015</div>
<div class="t" style="left:862.00px;top:640.67px;width:89.20px;text-align:right;font-size:8.6px;line-height:11px;color:#363636">14591</div>
<div class="t" style="left:955.20px;top:640.67px;font-size:8.6px;line-height:11px;color:#363636">Нет</div>
<div class="a" style="left:167px;top:651.55px;width:850px;height:11.45px;background:#fff"></div>
<svg class="a" style="left:170px;top:650px" width="840" height="14" viewBox="170 650 840 14"><path d="M174.6,657.1 L178,655.2 V659 Z" fill="#505050"/><path d="M993.5,654.6 L997.5,656.8 L993.5,659 Z" fill="#555"/></svg>
<div class="a" style="left:186.3px;top:653.2px;width:798.7px;height:6.8px;border-radius:3.4px;background:#d9d9d9"></div>
<div class="a" style="left:451.2px;top:653.2px;width:533.8px;height:6.8px;border-radius:3.4px;background:#a0a0a0"></div>
<div class="a" style="left:1007.3px;top:116.5px;width:6px;height:46px;border-radius:3px;background:#a4a4a4"></div>
<div class="a" style="left:951.5px;top:94px;width:61.5px;height:567px;border:3.6px solid #e2362c;border-radius:5px"></div>
<div class="a" style="left:7px;top:7px;width:1011px;height:657px;border:1px solid #dccb84;pointer-events:none"></div>
</body></html>
